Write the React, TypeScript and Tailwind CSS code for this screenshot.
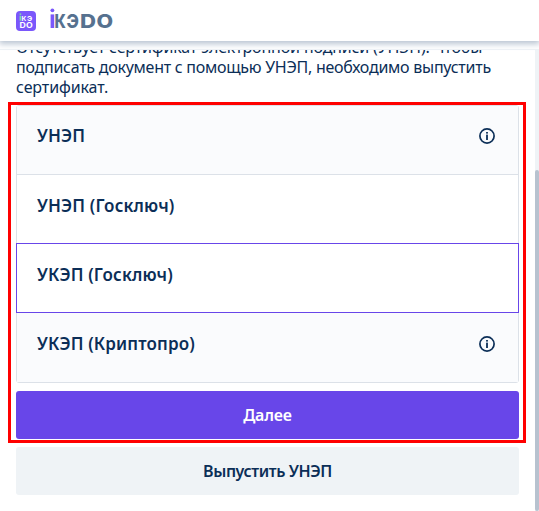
const methods = [
  { title: 'УНЭП', info: true, row: 'h-[69px] border-b border-[#dce1e8] bg-[#fafbfd] pt-[18px]' },
  { title: 'УНЭП (Госключ)', info: false, row: 'h-[68px] bg-white pt-[19px]' },
  { title: 'УКЭП (Госключ)', info: false, row: '-mx-px h-[70px] border border-[#6846e9] bg-white pt-[19px]' },
  { title: 'УКЭП (Криптопро)', info: true, row: 'h-[69px] bg-[#fafbfd] pt-[19px]' },
]

function InfoIcon() {
  return (
    <svg className="h-4 w-4" viewBox="0 0 16 16" fill="none">
      <circle cx="8" cy="8" r="7.1" stroke="#0b2e57" strokeWidth="1.7" />
      <rect x="7.1" y="6.6" width="1.8" height="5.4" fill="#0b2e57" />
      <rect x="7.1" y="4" width="1.8" height="1.6" fill="#0b2e57" />
    </svg>
  )
}

function Badge() {
  return (
    <svg className="h-5 w-5" viewBox="0 0 20 20" fontFamily="Inter, sans-serif" fontWeight="700" fill="#fff">
      <rect width="20" height="20" rx="4" fill="#7a57fb" />
      <rect x="3.6" y="2.4" width="1.6" height="1.5" fill="#7be0a4" />
      <rect x="3.6" y="4.8" width="1.6" height="5" fill="#7be0a4" />
      <text x="5.6" y="9.8" fontSize="6.8" textLength="4.8" lengthAdjust="spacingAndGlyphs">К</text>
      <text x="11" y="9.8" fontSize="6.8" textLength="5.2" lengthAdjust="spacingAndGlyphs">Э</text>
      <text x="3.6" y="17" fontSize="7.6" textLength="13" lengthAdjust="spacingAndGlyphs">DO</text>
    </svg>
  )
}

function Wordmark() {
  return (
    <svg className="h-6 w-16" viewBox="0 0 64 24" fontFamily="Inter, sans-serif" fontWeight="800" fontSize="18.5" fill="#56718f">
      <circle cx="2.4" cy="2.3" r="1.9" fill="#7a57fb" />
      <rect x="0.6" y="6.4" width="3.6" height="13.6" fill="#7a57fb" />
      <text x="4.6" y="20" textLength="11.4" lengthAdjust="spacingAndGlyphs">К</text>
      <text x="16.4" y="20" textLength="12.4" lengthAdjust="spacingAndGlyphs">Э</text>
      <text x="30" y="20" textLength="16" lengthAdjust="spacingAndGlyphs">D</text>
      <text x="46.6" y="20" textLength="16.6" lengthAdjust="spacingAndGlyphs">O</text>
    </svg>
  )
}

export default function App() {
  return (
    <div className="flex h-[511px] w-[539px] flex-col overflow-hidden bg-white font-['Noto_Sans','Open_Sans',sans-serif] text-[#0b2e57]">
      <header className="z-10 flex h-[41px] shrink-0 items-start bg-white px-4 shadow-[0_2px_6px_1px_#b9c4d2]">
        <div className="mt-[11px]"><Badge /></div>
        <div className="mt-2 ml-[14px]"><Wordmark /></div>
      </header>
      <div className="h-[9px] shrink-0 border-b border-[#eff3f6]" />

      <div className="flex min-h-0 flex-1">
        <main className="relative h-full w-[535px] overflow-hidden px-4">
          <p className="-mt-[13px] text-base leading-5 whitespace-nowrap">
            <span className="block tracking-[-0.15px]">Отсутствует сертификат электронной подписи (УНЭП). Чтобы</span>
            <span className="block tracking-[-0.26px]">подписать документ с помощью УНЭП, необходимо выпустить</span>
            <span className="block tracking-[-0.1px]">сертификат.</span>
          </p>

          <div className="mt-2 h-[278px] w-[503px] rounded-[3px] border border-[#dce1e8]">
            {methods.map((method) => (
              <div key={method.title} className={`flex justify-between pr-[23px] pl-5 ${method.row}`}>
                <span className="text-[17px] leading-6 font-semibold tracking-[0.15px]">{method.title}</span>
                {method.info && <span className="mt-[3.5px]"><InfoIcon /></span>}
              </div>
            ))}
          </div>

          <button className="mt-2 flex h-12 w-[503px] items-center justify-center rounded-[3px] bg-[#6846e9] text-base font-semibold tracking-[-0.15px] text-white">
            Далее
          </button>
          <button className="mt-2 flex h-12 w-[503px] items-center justify-center rounded-[3px] bg-[#eff3f6] text-base font-semibold tracking-[-0.4px]">
            Выпустить УНЭП
          </button>

          {/* Highlight frame around the choices */}
          <div className="pointer-events-none absolute top-[52px] left-2 h-[341px] w-[518px] border-3 border-[#ff0000]" />
        </main>
        <div className="w-1 bg-[#eff3f6] pt-[120px]">
          <div className="h-[341px] rounded-[2px] bg-[#b7c2cf]" />
        </div>
      </div>
    </div>
  )
}
